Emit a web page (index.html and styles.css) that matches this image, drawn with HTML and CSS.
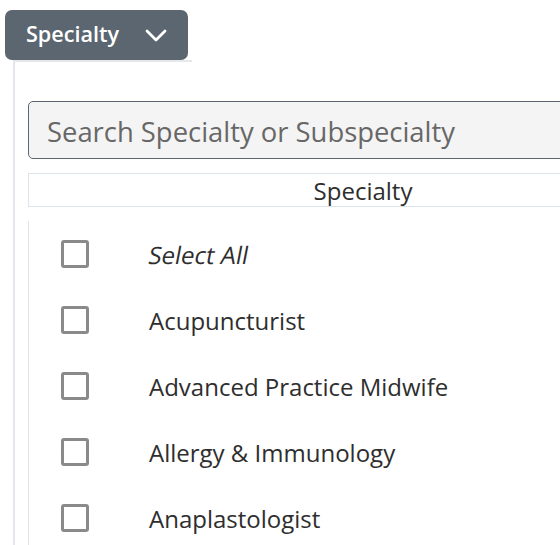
FILE: index.html
```html
<!DOCTYPE html>
<html>
<head>
<meta charset="utf-8">
<link rel="stylesheet" href="styles.css">
</head>
<body>
<div class="wrap">
  <button class="btn">
    <span class="btn-label">Specialty</span>
    <svg class="chev" width="22" height="13" viewBox="0 0 22 13"><path d="M2 2 L11 11 L20 2" fill="none" stroke="#fff" stroke-width="2.8" stroke-linecap="round" stroke-linejoin="round"/></svg>
  </button>
  <div class="panel">
    <div class="topline"></div>
    <div class="search">Search Specialty or Subspecialty</div>
    <div class="thead">Specialty</div>
    <div class="rows">
      <div class="row"><span class="cb"></span><span class="label italic">Select All</span></div>
      <div class="row"><span class="cb"></span><span class="label">Acupuncturist</span></div>
      <div class="row"><span class="cb"></span><span class="label">Advanced Practice Midwife</span></div>
      <div class="row"><span class="cb"></span><span class="label">Allergy &amp; Immunology</span></div>
      <div class="row"><span class="cb"></span><span class="label">Anaplastologist</span></div>
    </div>
  </div>
</div>
</body>
</html>
```
FILE: styles.css
```css
html, body {
  margin: 0;
  padding: 0;
  background: #fff;
  overflow: hidden;
}
body {
  font-family: "Open Sans", "Noto Sans", sans-serif;
  color: #333;
}
.wrap {
  padding: 10px 0 0 5px;
}
.btn {
  display: flex;
  align-items: center;
  width: 183px;
  height: 50px;
  box-sizing: border-box;
  border: none;
  border-radius: 7px;
  background: #5b6670;
  color: #fff;
  font-family: inherit;
  font-size: 21.6px;
  font-weight: 600;
  padding: 0 0 2px 21px;
  margin: 0;
}
.btn-label {
  line-height: 1;
}
.chev {
  margin-left: 26px;
  margin-top: 2px;
}
.panel {
  margin-left: 8px;
  border-left: 2px solid #e4e7eb;
  padding-left: 13px;
  height: 500px;
}
.topline {
  width: 177px;
  margin-left: -13px;
  height: 2px;
  background: #e6e8eb;
}
.search {
  margin-top: 39px;
  width: 700px;
  height: 58px;
  box-sizing: border-box;
  border: 1px solid #5b6670;
  border-radius: 5px;
  background: #f4f4f4;
  font-size: 27.4px;
  color: #676767;
  display: flex;
  align-items: center;
  padding-left: 18px;
  padding-top: 2px;
}
.thead {
  margin-top: 14px;
  width: 670px;
  height: 34px;
  box-sizing: border-box;
  border: 1px solid #dde3ea;
  display: flex;
  align-items: center;
  justify-content: center;
  font-size: 24px;
  color: #2e2e2e;
}
.rows {
  margin-top: 14px;
  border-left: 1px solid #dde3ea;
}
.row {
  height: 66px;
  display: flex;
  align-items: center;
  padding-left: 32px;
}
.cb {
  width: 28px;
  height: 28px;
  box-sizing: border-box;
  border: 3px solid #8a8a8a;
  border-radius: 3px;
  flex: none;
}
.label {
  margin-left: 60px;
  font-size: 24px;
  color: #2e2e2e;
}
.italic {
  display: inline-block;
  transform: skewX(-11deg);
}
```
